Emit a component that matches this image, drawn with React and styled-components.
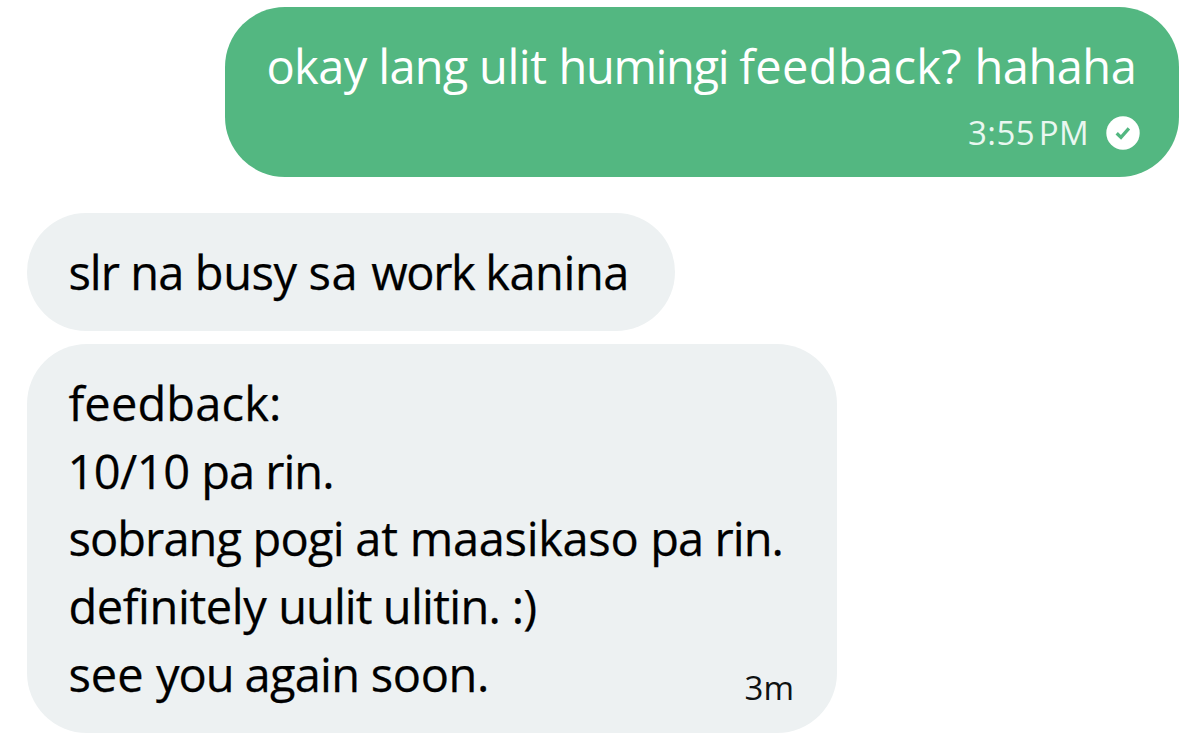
import React from 'react';
import styled, { createGlobalStyle } from 'styled-components';

const GlobalStyle = createGlobalStyle`
  * {
    box-sizing: border-box;
  }

  body {
    margin: 0;
    background-color: #ffffff;
    font-family: 'Open Sans', sans-serif;
  }
`;

const Thread = styled.main`
  height: 751px;
  padding: 7px 10px 0 27px;
  display: flex;
  flex-direction: column;
  overflow: hidden;
`;

const Group = styled.section`
  display: flex;
  flex-direction: column;
  align-items: ${(props) => (props.$own ? 'flex-end' : 'flex-start')};
  gap: 12.5px;
  margin-bottom: 36.5px;
`;

const Bubble = styled.article`
  width: ${(props) => props.$width}px;
  padding: ${(props) => (props.$own ? '26px 39px 26.5px 41.4px' : '26px 43px 24.6px 41.4px')};
  border-radius: 60px;
  display: flex;
  flex-direction: ${(props) => (props.$own ? 'column' : 'row')};
  align-items: flex-end;
  background-color: ${(props) => (props.$own ? '#53b781' : '#edf1f2')};
  color: ${(props) => (props.$own ? '#ffffff' : '#000000')};
  -webkit-text-stroke: ${(props) => (props.$own ? '0' : '0.25px')};
`;

const Text = styled.div`
  align-self: flex-start;
  flex: none;
  font-size: 47px;
  line-height: 67.7px;
  white-space: pre;
`;

const Line = styled.p`
  margin: 0;
  text-indent: ${(props) => props.$indent || 0}px;
`;

const Word = styled.span`
  letter-spacing: ${(props) => props.$tracking}px;
`;

const Meta = styled.div`
  display: flex;
  align-items: center;
  gap: 16.8px;
  margin-top: 15.3px;
  height: 34px;
`;

const Time = styled.time`
  font-size: 33px;
  line-height: 34px;
  letter-spacing: 0.5px;
  word-spacing: -5.6px;
  color: #e9f7f0;
`;

// shares the row with the last, shorter line of text
const Age = styled(Time)`
  flex: none;
  letter-spacing: 0;
  margin: 0 0 3px auto;
  color: #0f1212;
  -webkit-text-stroke: 0;
`;

const LastRow = styled.div`
  display: flex;
  align-items: flex-end;
  width: 725.6px;
`;

const SentIcon = styled.svg`
  display: block;
  width: 34px;
  height: 34px;
`;

// each word carries its own tracking: [word, px]
const question = [
  {
    words: [['okay', -0.58], ['lang', -0.78], ['ulit', -0.42], ['humingi', -1.33], ['feedback?', 0.33], ['hahaha', -0.5]],
  },
];

const reply = [
  {
    words: [['slr', -0.93], ['na', -0.9], ['busy', -0.42], ['sa', 0.7], ['work', -1.38], ['kanina', -0.45]],
  },
];

const feedback = [
  { words: [['feedback:', 0.15]] },
  { words: [['10/10', -0.53], ['pa', -1.03], ['rin.', -0.97]], indent: -1 },
  { words: [['sobrang', -0.91], ['pogi', -0.78], ['at', -0.13], ['maasikaso', -0.33], ['pa', -0.93], ['rin.', -0.97]] },
  { words: [['definitely', -0.41], ['uulit', -0.95], ['ulitin.', -0.71], [':)', -0.7]] },
  { words: [['see', 0.08], ['you', -1.1], ['again', -0.75], ['soon.', -0.37]] },
];

const Words = ({ line }) => (
  <Line $indent={line.indent}>
    {line.words.map(([word, tracking], index) => (
      <Word key={index} $tracking={tracking}>
        {index < line.words.length - 1 ? `${word} ` : word}
      </Word>
    ))}
  </Line>
);

const Message = ({ lines, age }) => (
  <Text>
    {lines.map((line, index) =>
      age && index === lines.length - 1 ? (
        <LastRow key={index}>
          <Words line={line} />
          <Age>{age}</Age>
        </LastRow>
      ) : (
        <Words key={index} line={line} />
      )
    )}
  </Text>
);

const App = () => {
  return (
    <>
      <GlobalStyle />
      <Thread>
        <Group $own>
          <Bubble $own $width={954}>
            <Message lines={question} />
            <Meta>
              <Time>3:55 PM</Time>
              <SentIcon viewBox="0 0 34 34" aria-label="Sent">
                <circle cx="17" cy="17" r="16.7" fill="#ffffff" />
                <path d="M10.7 17.2l4.3 4.2 7.9-9" fill="none" stroke="#53b781" strokeWidth="3.3" />
              </SentIcon>
            </Meta>
          </Bubble>
        </Group>
        <Group>
          <Bubble $width={648}>
            <Message lines={reply} />
          </Bubble>
          <Bubble $width={810}>
            <Message lines={feedback} age="3m" />
          </Bubble>
        </Group>
      </Thread>
    </>
  );
};

export default App;
